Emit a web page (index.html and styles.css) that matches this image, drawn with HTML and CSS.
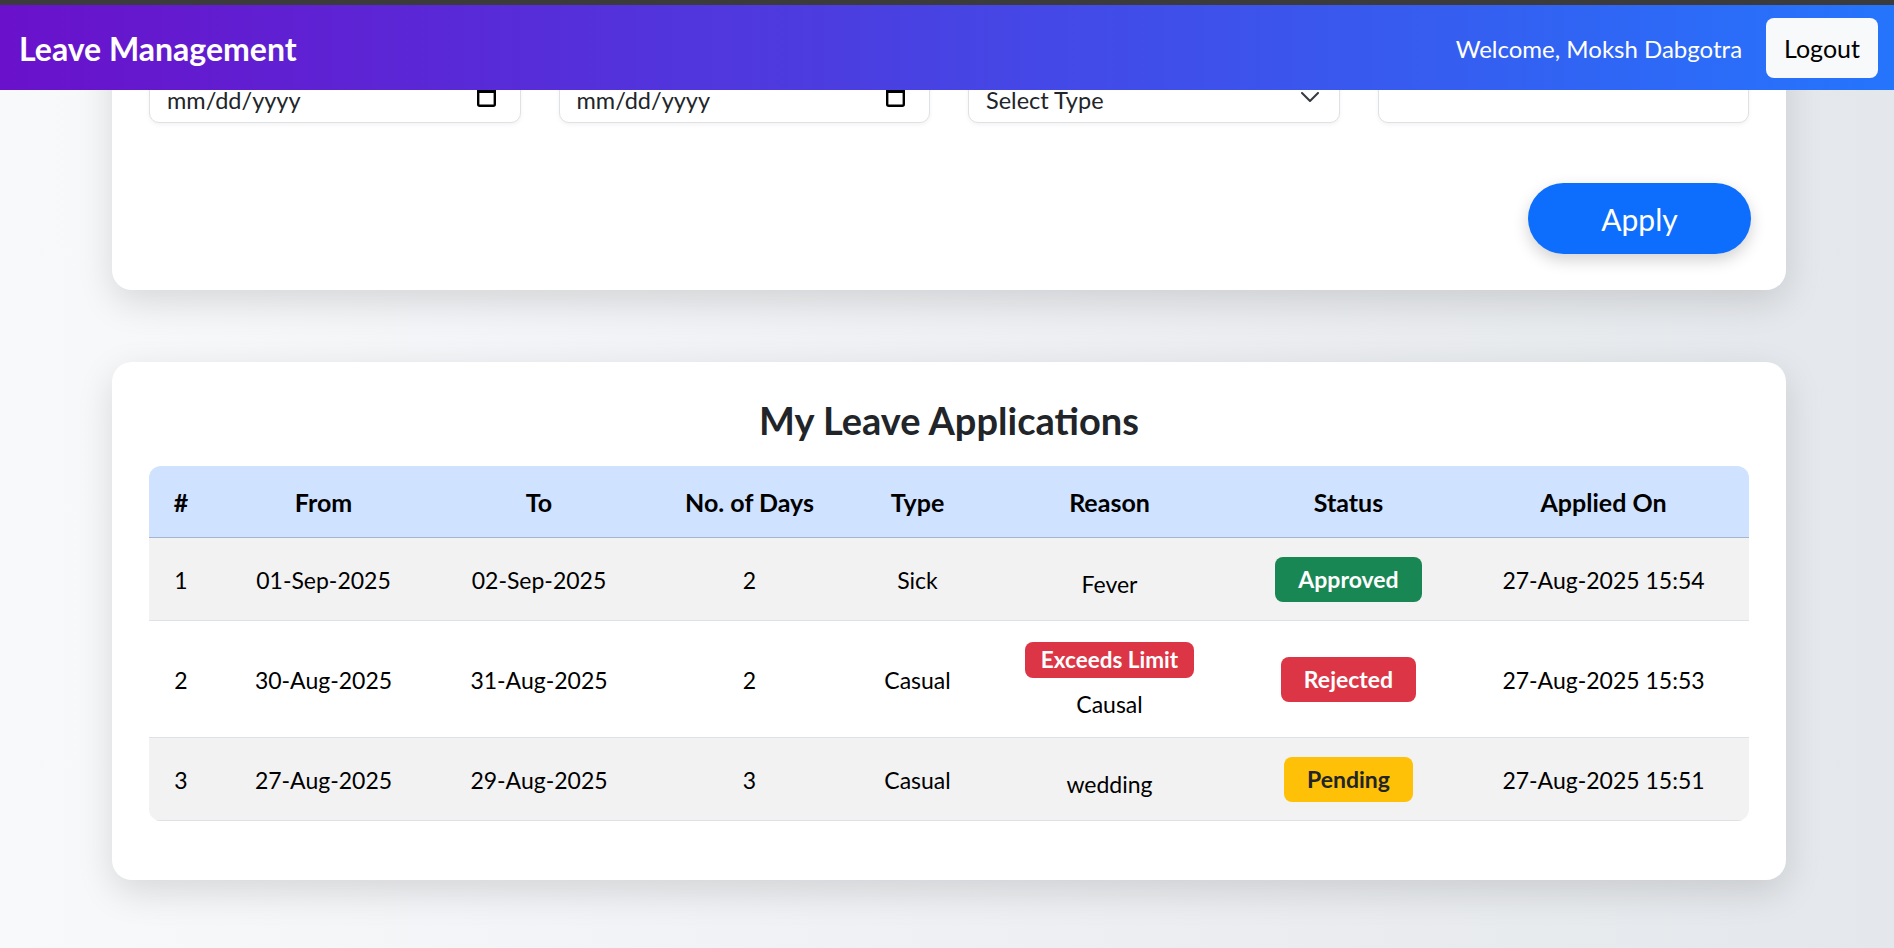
FILE: index.html
```html
<!DOCTYPE html>
<html lang="en">
<head>
<meta charset="utf-8">
<title>Leave Management</title>
<link rel="stylesheet" href="styles.css">
</head>
<body>
<header class="topbar">
  <div class="brand">Leave Management</div>
  <div class="user">
    <span class="welcome">Welcome, Moksh Dabgotra</span>
    <button class="logout" type="button">Logout</button>
  </div>
</header>

<main class="page">
  <section class="card apply-card">
    <div class="fields">
      <div class="field">
        <span class="field-text">mm/dd/yyyy</span>
        <svg class="cal-icon" width="19" height="20" viewBox="0 0 19 20" aria-hidden="true">
          <rect x="1.2" y="1.2" width="16.6" height="17.6" rx="1.5" fill="none" stroke="#000" stroke-width="2.4"/>
          <rect x="1" y="1" width="17" height="5" fill="#000"/>
        </svg>
      </div>
      <div class="field">
        <span class="field-text">mm/dd/yyyy</span>
        <svg class="cal-icon" width="19" height="20" viewBox="0 0 19 20" aria-hidden="true">
          <rect x="1.2" y="1.2" width="16.6" height="17.6" rx="1.5" fill="none" stroke="#000" stroke-width="2.4"/>
          <rect x="1" y="1" width="17" height="5" fill="#000"/>
        </svg>
      </div>
      <div class="field select-field">
        <span class="field-text">Select Type</span>
        <svg class="chevron" width="18" height="10" viewBox="0 0 18 10" aria-hidden="true">
          <path d="M1 1 L9 9 L17 1" fill="none" stroke="#343a40" stroke-width="2" stroke-linecap="round" stroke-linejoin="round"/>
        </svg>
      </div>
      <div class="field"></div>
    </div>
    <div class="actions">
      <button class="apply" type="button">Apply</button>
    </div>
  </section>

  <section class="card list-card">
    <h3 class="list-title">My Leave Applications</h3>
    <div class="table-wrap">
      <table class="leaves">
        <colgroup>
          <col class="c-num"><col class="c-from"><col class="c-to"><col class="c-days">
          <col class="c-type"><col class="c-reason"><col class="c-status"><col class="c-applied">
        </colgroup>
        <thead>
          <tr>
            <th>#</th><th>From</th><th>To</th><th>No. of Days</th>
            <th>Type</th><th>Reason</th><th>Status</th><th>Applied On</th>
          </tr>
        </thead>
        <tbody>
          <tr class="striped">
            <td>1</td><td>01-Sep-2025</td><td>02-Sep-2025</td><td>2</td><td>Sick</td>
            <td><div class="reason-text">Fever</div></td>
            <td><span class="badge approved">Approved</span></td>
            <td>27-Aug-2025 15:54</td>
          </tr>
          <tr>
            <td>2</td><td>30-Aug-2025</td><td>31-Aug-2025</td><td>2</td><td>Casual</td>
            <td><div class="flag"><span class="limit">Exceeds Limit</span></div><div class="reason-text">Causal</div></td>
            <td><span class="badge rejected">Rejected</span></td>
            <td>27-Aug-2025 15:53</td>
          </tr>
          <tr class="striped">
            <td>3</td><td>27-Aug-2025</td><td>29-Aug-2025</td><td>3</td><td>Casual</td>
            <td><div class="reason-text">wedding</div></td>
            <td><span class="badge pending">Pending</span></td>
            <td>27-Aug-2025 15:51</td>
          </tr>
        </tbody>
      </table>
    </div>
  </section>
</main>
</body>
</html>
```

FILE: styles.css
```css
* { box-sizing: border-box; }

html {
  background: linear-gradient(90deg, #f8f9fb 0%, #eef0f3 50%, #e4e7eb 100%);
  min-height: 100%;
}

body {
  margin: 0;
  min-height: 948px;
  font-family: Lato, "Liberation Sans", sans-serif;
  font-size: 23px;
  color: #212529;
  background: transparent;
}

/* ---------- top bar ---------- */
.topbar {
  position: fixed;
  top: 0;
  left: 0;
  right: 0;
  z-index: 10;
  height: 90px;
  border-top: 5px solid #3b3b3b;
  background: linear-gradient(90deg, #6a11cb 0%, #2575fc 100%);
  display: flex;
  align-items: center;
  justify-content: space-between;
  padding: 0 16px 0 19px;
}

.brand {
  color: #fff;
  font-weight: 700;
  font-size: 32px;
  margin-top: 2px;
}

.user {
  display: flex;
  align-items: center;
  gap: 24px;
}

.welcome {
  color: #fff;
  font-size: 24px;
  margin-top: 2px;
}

.logout {
  font-family: inherit;
  font-size: 25px;
  color: #000;
  background: #f8f9fa;
  border: none;
  border-radius: 8px;
  height: 60px;
  padding: 0 18px;
  margin-top: 1px;
}

/* ---------- page ---------- */
.page {
  padding: 30px 108px 60px 112px;
  display: flex;
  flex-direction: column;
  gap: 72px;
}

.card {
  background: #fff;
  border-radius: 20px;
  box-shadow: 0 12px 36px rgba(0, 0, 0, 0.13);
  padding: 37px 37px 38px;
}

.apply-card {
  padding-top: 46px;
  padding-bottom: 36px;
}

.fields {
  display: grid;
  grid-template-columns: repeat(4, 1fr);
  gap: 38px;
}

.field {
  height: 47px;
  border: 1px solid #dee2e6;
  border-radius: 10px;
  background: #fff;
  box-shadow: 0 2px 4px rgba(0, 0, 0, 0.05);
  display: flex;
  align-items: center;
  justify-content: space-between;
  padding: 0 22px 0 17px;
  line-height: 30px;
}

.select-field {
  padding-right: 20px;
}

.field-text {
  color: #212529;
  font-size: 23.5px;
}

.cal-icon {
  margin-top: -5px;
  margin-right: 2px;
}

.chevron {
  margin-top: -6px;
}

.actions {
  display: flex;
  justify-content: flex-end;
  margin-top: 60px;
}

.apply {
  font-family: inherit;
  font-size: 30px;
  color: #fff;
  background: #0d6efd;
  border: none;
  border-radius: 36px;
  width: 223px;
  height: 71px;
  margin-right: -2px;
  box-shadow: 0 6px 16px rgba(0, 0, 0, 0.18);
}

/* ---------- list ---------- */
.list-title {
  margin: 0 0 25px;
  text-align: center;
  font-size: 38px;
  line-height: 42px;
  font-weight: 700;
  color: #212529;
}

.table-wrap {
  border-radius: 12px;
  overflow: hidden;
  margin-bottom: 21px;
}

.leaves {
  width: 100%;
  border-collapse: collapse;
  table-layout: fixed;
  text-align: center;
}

.c-num { width: 64px; }
.c-from { width: 221px; }
.c-to { width: 210px; }
.c-days { width: 211px; }
.c-type { width: 125px; }
.c-reason { width: 259px; }
.c-status { width: 219px; }
.c-applied { width: 291px; }

.leaves th {
  background: #cfe2ff;
  color: #000;
  font-weight: 700;
  font-size: 25px;
  line-height: 30px;
  padding: 21px 4px 20px;
  border-bottom: 1px solid #a6b5cc;
}

.leaves td {
  color: #000;
  line-height: 30px;
  padding: 19px 4px 18px;
  vertical-align: middle;
  border-bottom: 1px solid #dee2e6;
}

.leaves tr.striped td {
  background: #f2f2f2;
}

.reason-text {
  margin-top: 8px;
}

.flag {
  display: flex;
  justify-content: center;
  padding-top: 2px;
  padding-bottom: 3px;
}

.limit {
  display: inline-block;
  background: #dc3545;
  color: #fff;
  font-weight: 700;
  font-size: 22.5px;
  line-height: 36px;
  height: 36px;
  padding: 0 16px;
  border-radius: 8px;
}

.badge {
  display: inline-block;
  font-weight: 700;
  font-size: 23px;
  line-height: 45px;
  height: 45px;
  padding: 0 23px;
  border-radius: 8px;
  color: #fff;
}

.approved { background: #198754; }
.rejected { background: #dc3545; }
.pending { background: #ffc107; color: #212529; }
```
